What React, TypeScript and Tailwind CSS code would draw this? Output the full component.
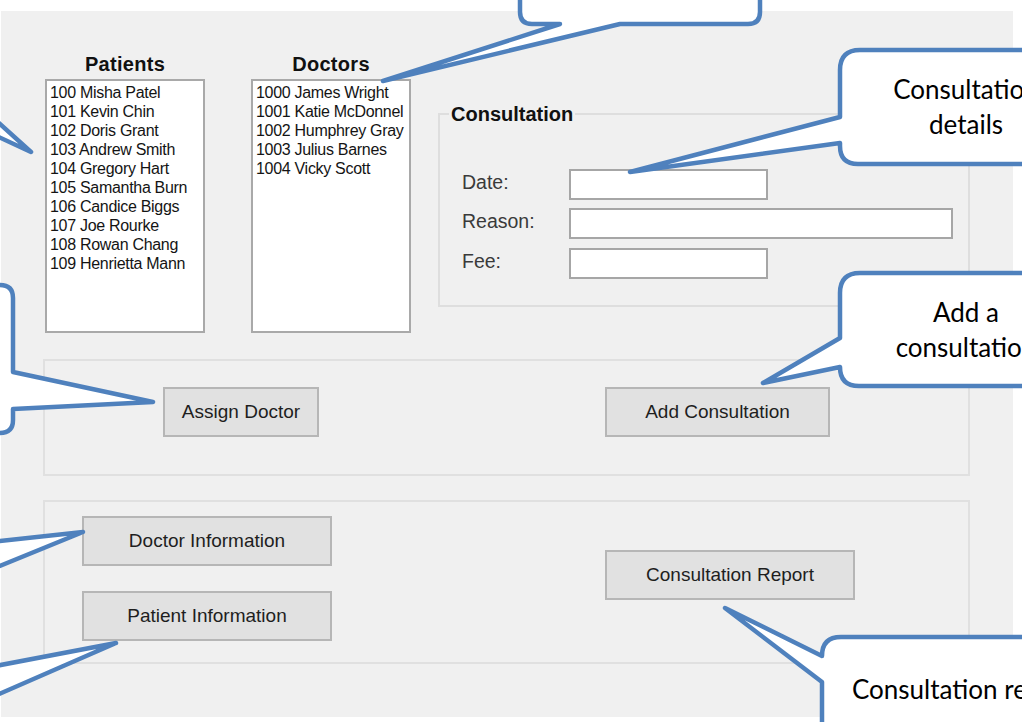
import React from 'react';

const patients = [
  '100 Misha Patel',
  '101 Kevin Chin',
  '102 Doris Grant',
  '103 Andrew Smith',
  '104 Gregory Hart',
  '105 Samantha Burn',
  '106 Candice Biggs',
  '107 Joe Rourke',
  '108 Rowan Chang',
  '109 Henrietta Mann',
];

const doctors = [
  '1000 James Wright',
  '1001 Katie McDonnel',
  '1002 Humphrey Gray',
  '1003 Julius Barnes',
  '1004 Vicky Scott',
];

const ListColumn = ({ title, items, className }: { title: string; items: string[]; className: string }) => (
  <div className={`flex flex-col w-[160px] ${className}`}>
    <div className="h-[24px] leading-[24px] text-center text-[20px] font-bold tracking-[0.3px] text-[#111]">{title}</div>
    <div className="mt-[3px] h-[254px] bg-white border-2 border-[#a9a9a9] pl-[3px] pt-[2px] overflow-hidden">
      {items.map((item) => (
        <div key={item} className="h-[19px] leading-[19px] text-[16px] tracking-[-0.3px] text-[#141414] whitespace-nowrap">
          {item}
        </div>
      ))}
    </div>
  </div>
);

const FormButton = ({ label, className }: { label: string; className: string }) => (
  <button className={`h-[50px] bg-[#e1e1e1] border-2 border-[#b6b6b6] text-[19px] text-[#1e1e1e] ${className}`}>
    {label}
  </button>
);

const Field = ({ label, width, className = '' }: { label: string; width: string; className?: string }) => (
  <div className={`flex items-center ${className}`}>
    <div className="w-[107px] text-[19.5px] text-[#3a3a3a] -mt-[3px]">{label}</div>
    <div className={`h-[31px] bg-white border-2 border-[#a6a6a6] ${width}`} />
  </div>
);

const Callouts = () => (
  <svg className="absolute left-0 top-0 pointer-events-none" width="1022" height="722" viewBox="0 0 1022 722">
    <g fill="white" stroke="#4f81bd" strokeWidth="4.5" strokeLinejoin="round">
      {/* top callout to doctors list */}
      <path d="M 520,-30 L 520,12 Q 520,24 532,24 L 560,24 L 383,81 L 620,24 L 748,24 Q 760,24 760,12 L 760,-30 Z" />
      {/* left callout to patients list */}
      <path d="M -10,115 L 31,152 L -10,133 Z" />
      {/* left callout to assign doctor */}
      <path d="M -10,285 L 0,285 Q 13,285 13,298 L 13,372 L 153,402 L 13,409 L 13,420 Q 13,433 0,433 L -10,433 Z" />
      {/* doctor information */}
      <path d="M -10,542 L 83,532 L -10,570 Z" />
      {/* patient information */}
      <path d="M -10,667 L 116,643 L -10,698 Z" />
      {/* consultation details */}
      <path d="M 1100,50 L 860,50 Q 840,50 840,70 L 840,117 L 630,172 L 840,143 L 840,146 Q 840,164 858,164 L 1100,164 Z" />
      {/* add a consultation */}
      <path d="M 1100,273 L 860,273 Q 840,273 840,293 L 840,338 L 763,383 L 840,367 Q 840,386 859,386 L 1100,386 Z" />
      {/* consultation report */}
      <path d="M 1100,637 L 841,637 Q 822,637 822,656 L 725,608 L 822,682 L 822,760 L 1100,760 Z" />
    </g>
  </svg>
);

const App = () => {
  return (
    <div className="relative w-[1022px] h-[722px] overflow-hidden bg-white font-['Liberation_Sans',Arial,sans-serif]">
      <div className="ml-[1px] mt-[11px] w-[1012px] h-[706px] bg-[#f0f0f0] pl-[42px] pt-[41px]">
        <div className="flex items-start">
          <ListColumn title="Patients" items={patients} className="ml-[2px]" />
          <ListColumn title="Doctors" items={doctors} className="ml-[46px]" />
          <fieldset className="ml-[27px] mt-[50px] w-[532px] border-2 border-[#dedede] pb-[26px]">
            <legend className="ml-[9px] px-[2px] h-[24px] leading-[24px] text-[20px] font-bold text-[#111]">Consultation</legend>
            <div className="pl-[22px] pt-[43px] flex flex-col">
              <Field label="Date:" width="w-[199px]" />
              <Field label="Reason:" width="w-[384px]" className="mt-[8px]" />
              <Field label="Fee:" width="w-[199px]" className="mt-[9px]" />
            </div>
          </fieldset>
        </div>

        <div className="mt-[26px] w-[927px] h-[117px] border-2 border-[#e0e0e0] flex items-start pt-[26px] pl-[118px]">
          <FormButton label="Assign Doctor" className="w-[156px]" />
          <FormButton label="Add Consultation" className="w-[225px] ml-[286px]" />
        </div>

        <div className="mt-[24px] w-[927px] h-[164px] border-2 border-[#e0e0e0] flex items-start pt-[14px] pl-[37px]">
          <div className="flex flex-col gap-[25px]">
            <FormButton label="Doctor Information" className="w-[250px]" />
            <FormButton label="Patient Information" className="w-[250px]" />
          </div>
          <FormButton label="Consultation Report" className="w-[250px] ml-[273px] mt-[34px]" />
        </div>
      </div>

      <Callouts />

      <div className="absolute left-[840px] top-[72px] w-[252px] text-center font-['Lato',sans-serif] text-[26px] leading-[35px] text-black">
        Consultation
        <br />
        details
      </div>
      <div className="absolute left-[840px] top-[295px] w-[252px] text-center font-['Lato',sans-serif] text-[26px] leading-[35px] text-black">
        Add a
        <br />
        consultation
      </div>
      <div className="absolute left-[852px] top-[672px] whitespace-nowrap font-['Lato',sans-serif] text-[26px] leading-[35px] text-black">
        Consultation report
      </div>
    </div>
  );
};

export default App;
